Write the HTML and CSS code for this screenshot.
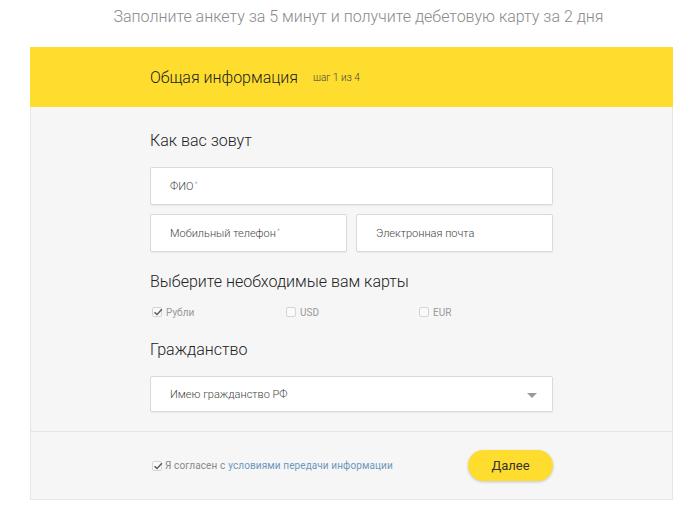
FILE: index.html
```html
<!DOCTYPE html>
<html lang="ru">
<head>
<meta charset="utf-8">
<title>Анкета</title>
<link rel="stylesheet" href="styles.css">
</head>
<body>
<p class="subtitle">Заполните анкету за 5 минут и получите дебетовую карту за 2 дня</p>
<div class="card">
  <div class="card-header">
    <span class="header-title">Общая информация</span>
    <span class="header-step">шаг 1 из 4</span>
  </div>
  <div class="card-body">
    <h2 class="section-title first">Как вас зовут</h2>
    <div class="field field-full">ФИО<sup class="req">*</sup></div>
    <div class="field-row">
      <div class="field">Мобильный телефон<sup class="req">*</sup></div>
      <div class="field">Электронная почта</div>
    </div>
    <h2 class="section-title">Выберите необходимые вам карты</h2>
    <div class="checks">
      <label class="check"><span class="box checked"><svg viewBox="0 0 10 10" width="10" height="10"><path d="M1.5 5.2 L4 7.6 L8.8 2.2" fill="none" stroke="#555" stroke-width="1.4"/></svg></span>Рубли</label>
      <label class="check"><span class="box"></span>USD</label>
      <label class="check"><span class="box"></span>EUR</label>
    </div>
    <h2 class="section-title">Гражданство</h2>
    <div class="field select">Имею гражданство РФ<span class="arrow"></span></div>
  </div>
  <div class="card-footer">
    <label class="agree"><span class="box checked"><svg viewBox="0 0 10 10" width="10" height="10"><path d="M1.5 5.2 L4 7.6 L8.8 2.2" fill="none" stroke="#555" stroke-width="1.4"/></svg></span>Я согласен с <a class="link" href="#">условиями передачи информации</a></label>
    <button class="btn">Далее</button>
  </div>
</div>
</body>
</html>
```
FILE: styles.css
```css
* { box-sizing: border-box; }
body {
  margin: 0;
  background: #fff;
  font-family: Roboto, "Liberation Sans", sans-serif;
  color: #333;
}
.subtitle {
  margin: 0;
  padding-top: 7px;
  padding-left: 17px;
  height: 47px;
  text-align: center;
  font-size: 16px;
  line-height: 20px;
  font-weight: 300;
  color: #8a8a8a;
}
.card {
  width: 643px;
  margin-left: 30px;
  border: 1px solid #e6e6e6;
  background: #f6f6f6;
}
.card-header {
  height: 60px;
  background: #fedd2e;
  display: flex;
  align-items: center;
  padding-left: 119px;
  margin: -1px -1px 0 -1px;
}
.header-title {
  font-size: 16px;
  font-weight: 300;
  color: #222;
  padding-left: 1px;
}
.header-step {
  font-size: 10px;
  font-weight: 300;
  color: #444;
  margin-left: 15px;
}
.card-body {
  padding: 24px 119px 19px 119px;
  border-bottom: 1px solid #e4e4e4;
}
.section-title {
  margin: 20px 0 0 0;
  font-size: 16px;
  line-height: 20px;
  font-weight: 300;
  color: #222;
}
.section-title.first { margin-top: 0; }
.field {
  background: #fff;
  border: 1px solid #dadada;
  border-radius: 2px;
  box-shadow: 0 1px 1px rgba(0,0,0,0.06);
  height: 38px;
  display: flex;
  align-items: center;
  padding-left: 19px;
  font-size: 11px;
  font-weight: 300;
  color: #444;
}
.field-full { margin-top: 16px; }
.req {
  font-size: 7px;
  color: #aaa;
  align-self: flex-start;
  margin-top: 12px;
  margin-left: 1px;
}
.field-row {
  display: grid;
  grid-template-columns: 1fr 1fr;
  gap: 9px;
  margin-top: 9px;
}
.checks {
  display: grid;
  grid-template-columns: 134px 133px 1fr;
  margin-top: 12px;
  height: 16px;
  align-items: center;
}
.check, .agree {
  display: flex;
  align-items: center;
  font-size: 10px;
  color: #999;
  padding-left: 2px;
}
.box {
  width: 10px;
  height: 10px;
  border: 1px solid #d4d4d4;
  border-radius: 2px;
  background: #fafafa;
  margin-right: 4px;
  position: relative;
  flex: none;
}
.box svg {
  position: absolute;
  left: 0;
  top: -1px;
}
.select {
  margin-top: 16px;
  height: 36px;
  position: relative;
}
.arrow {
  position: absolute;
  right: 15px;
  top: 16px;
  width: 0;
  height: 0;
  border-left: 5px solid transparent;
  border-right: 5px solid transparent;
  border-top: 5px solid #999;
}
.card-footer {
  height: 67px;
  display: flex;
  align-items: center;
  justify-content: space-between;
  padding: 0 119px 0 121px;
}
.agree {
  font-size: 10px;
  letter-spacing: 0.1px;
  color: #888;
  padding-left: 0;
}
.agree .box { margin-right: 3px; }
.link {
  color: #6d97bd;
  text-decoration: none;
  margin-left: 3px;
}
.btn {
  width: 85px;
  height: 31px;
  border: none;
  border-radius: 16px;
  background: #fedd2e;
  box-shadow: 0 1px 3px rgba(0,0,0,0.2);
  font-family: Roboto, "Liberation Sans", sans-serif;
  font-size: 13px;
  color: #333;
}
```
